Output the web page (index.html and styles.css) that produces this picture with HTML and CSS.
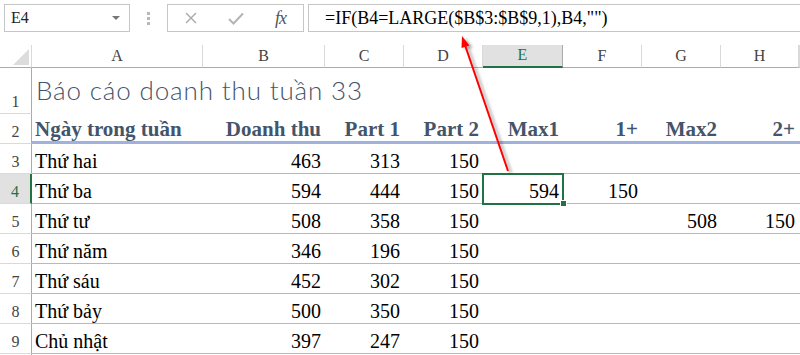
FILE: index.html
```html
<!DOCTYPE html>
<html lang="vi">
<head>
    <meta charset="UTF-8">
    <title>Báo cáo doanh thu tuần 33</title>
    <link rel="stylesheet" href="styles.css">
</head>
<body>
    <div class="formula-bar">
        <div class="name-box">
            <span>E4</span>
            <span class="caret"></span>
        </div>
        <div class="grip"><span></span><span></span><span></span></div>
        <div class="fx-box">
            <span class="fx-btn">
                <svg width="12" height="12" viewBox="0 0 12 12"><path d="M1 1 L11 11 M11 1 L1 11" stroke="#a8a8a8" stroke-width="1.4" fill="none"/></svg>
            </span>
            <span class="fx-btn">
                <svg width="16" height="13" viewBox="0 0 16 13"><path d="M1 7 L5.5 11.5 L15 1.5" stroke="#b4b4b4" stroke-width="2" fill="none"/></svg>
            </span>
            <span class="fx-btn fx-label"><i>f</i><i>x</i></span>
        </div>
        <div class="formula">=IF(B4=LARGE($B$3:$B$9,1),B4,"")</div>
    </div>

    <div class="sheet">
        <div class="row cols">
            <div class="corner"><span class="tri"></span></div>
            <div>A</div><div>B</div><div>C</div><div>D</div>
            <div class="active">E</div>
            <div>F</div><div>G</div><div>H</div><div></div>
        </div>
        <div class="row r1">
            <div class="rh">1</div>
            <div class="c title">Báo cáo doanh thu tuần 33</div>
            <div class="c"></div><div class="c"></div><div class="c"></div><div class="c"></div>
            <div class="c"></div><div class="c"></div><div class="c"></div><div class="c"></div>
        </div>
        <div class="row r2">
            <div class="rh">2</div>
            <div class="c">Ngày trong tuần</div>
            <div class="c num">Doanh thu</div>
            <div class="c num">Part 1</div>
            <div class="c num">Part 2</div>
            <div class="c num">Max1</div>
            <div class="c num">1+</div>
            <div class="c num">Max2</div>
            <div class="c num">2+</div>
            <div class="c"></div>
        </div>
        <div class="row">
            <div class="rh">3</div>
            <div class="c">Thứ hai</div>
            <div class="c num">463</div><div class="c num">313</div><div class="c num">150</div>
            <div class="c"></div><div class="c"></div><div class="c"></div><div class="c"></div><div class="c"></div>
        </div>
        <div class="row">
            <div class="rh current">4</div>
            <div class="c">Thứ ba</div>
            <div class="c num">594</div><div class="c num">444</div><div class="c num">150</div>
            <div class="c num sel">594</div>
            <div class="c num">150</div>
            <div class="c"></div><div class="c"></div><div class="c"></div>
        </div>
        <div class="row">
            <div class="rh">5</div>
            <div class="c">Thứ tư</div>
            <div class="c num">508</div><div class="c num">358</div><div class="c num">150</div>
            <div class="c"></div><div class="c"></div>
            <div class="c num">508</div>
            <div class="c num">150</div>
            <div class="c"></div>
        </div>
        <div class="row">
            <div class="rh">6</div>
            <div class="c">Thứ năm</div>
            <div class="c num">346</div><div class="c num">196</div><div class="c num">150</div>
            <div class="c"></div><div class="c"></div><div class="c"></div><div class="c"></div><div class="c"></div>
        </div>
        <div class="row">
            <div class="rh">7</div>
            <div class="c">Thứ sáu</div>
            <div class="c num">452</div><div class="c num">302</div><div class="c num">150</div>
            <div class="c"></div><div class="c"></div><div class="c"></div><div class="c"></div><div class="c"></div>
        </div>
        <div class="row">
            <div class="rh">8</div>
            <div class="c">Thứ bảy</div>
            <div class="c num">500</div><div class="c num">350</div><div class="c num">150</div>
            <div class="c"></div><div class="c"></div><div class="c"></div><div class="c"></div><div class="c"></div>
        </div>
        <div class="row">
            <div class="rh">9</div>
            <div class="c">Chủ nhật</div>
            <div class="c num">397</div><div class="c num">247</div><div class="c num">150</div>
            <div class="c"></div><div class="c"></div><div class="c"></div><div class="c"></div><div class="c"></div>
        </div>
        <div class="row tail">
            <div class="rh"></div>
            <div class="c"></div>
        </div>
    </div>

    <!-- callout arrow from E4 to the formula -->
    <svg class="arrow" width="800" height="355" viewBox="0 0 800 355">
        <defs>
            <filter id="shadow" x="-50%" y="-50%" width="200%" height="200%">
                <feDropShadow dx="3" dy="2" stdDeviation="1.5" flood-color="#000" flood-opacity="0.35"/>
            </filter>
        </defs>
        <g filter="url(#shadow)">
            <line x1="508" y1="171" x2="465" y2="45" stroke="#ff0000" stroke-width="2"/>
            <polygon points="462,36 469.5,45.5 461.5,48" fill="#ff0000"/>
        </g>
    </svg>
</body>
</html>
```

FILE: styles.css
```css
body {
    margin: 0;
    width: 800px;
    height: 355px;
    overflow: hidden;
    position: relative;
    background-color: #fff;
    font-family: "Liberation Serif", "Times New Roman", serif;
    color: #000;
}

/* formula bar */

.formula-bar {
    display: flex;
    align-items: flex-start;
    height: 45px;
    padding: 4px 0 0 4px;
    box-sizing: border-box;
}

.name-box {
    display: flex;
    align-items: center;
    justify-content: space-between;
    width: 126px;
    height: 28px;
    box-sizing: border-box;
    padding: 0 9px 0 6px;
    border: 1px solid #c6c6c6;
    font-size: 16px;
    color: #222;
}

.caret {
    border-left: 4px solid transparent;
    border-right: 4px solid transparent;
    border-top: 4px solid #777;
}

.grip {
    display: flex;
    flex-direction: column;
    align-items: center;
    gap: 2px;
    width: 37px;
    padding-top: 8px;
}

.grip span {
    width: 3px;
    height: 3px;
    background-color: #b8b8b8;
}

.fx-box {
    display: flex;
    align-items: center;
    width: 137px;
    height: 28px;
    box-sizing: border-box;
    border: 1px solid #c6c6c6;
}

.fx-btn {
    display: flex;
    align-items: center;
    justify-content: center;
    width: 45px;
}

.fx-label {
    font-size: 18px;
    color: #555;
    letter-spacing: -1px;
}

.formula {
    flex: 1;
    display: flex;
    align-items: center;
    height: 28px;
    box-sizing: border-box;
    margin-left: 4px;
    padding-left: 16px;
    border: 1px solid #c6c6c6;
    border-right: none;
    font-size: 18px;
}

/* sheet grid */

.row {
    display: grid;
    grid-template-columns: 32px 171px 122px 79px 79px 80px 79px 79px 78px 1fr;
    height: 30px;
}

.row > div {
    display: flex;
    align-items: flex-end;
    box-sizing: border-box;
    white-space: nowrap;
}

.cols {
    height: 23px;
}

.cols > div {
    justify-content: center;
    padding-bottom: 2px;
    border-bottom: 1px solid #ababab;
    border-right: 1px solid #d9d9d9;
    font-size: 16px;
    color: #444;
}

.cols .corner {
    justify-content: flex-end;
    padding: 0 2px 2px 0;
}

.tri {
    width: 16px;
    height: 16px;
    background-color: #dcdcdc;
    clip-path: polygon(100% 0, 100% 100%, 0 100%);
}

.cols .active {
    background-color: #e1e1e1;
    color: #217346;
    border-bottom: 2px solid #217346;
    border-right-color: #ababab;
}

.rh {
    justify-content: center;
    padding-bottom: 2px;
    border-right: 1px solid #ababab;
    border-bottom: 1px solid #d9d9d9;
    font-size: 16px;
    color: #444;
}

.rh.current {
    background-color: #e1e1e1;
    color: #217346;
    border-right: 2px solid #217346;
}

.c {
    padding: 0 4px 1px 3px;
    border-bottom: 1px solid #a8b8de;
    font-size: 20px;
    line-height: 22px;
}

.num {
    justify-content: flex-end;
}

.tail {
    height: 2px;
}

.tail > div {
    border-bottom: none;
}

.r1 {
    height: 46px;
}

.r1 .c {
    border-bottom: none;
}

.title {
    padding-left: 4px;
    padding-bottom: 8px;
    font-family: Lato, "Open Sans", sans-serif;
    font-weight: 300;
    font-size: 26px;
    line-height: 31px;
    letter-spacing: 0.85px;
    color: #44546a;
}

.r2 .c {
    padding-bottom: 0;
    border-bottom: 3px solid #9fb1dc;
    font-weight: bold;
    font-size: 21px;
    line-height: 23px;
    color: #44546a;
}

.sel {
    position: relative;
    outline: 2px solid #217346;
    outline-offset: -1px;
}

.sel::after {
    content: "";
    position: absolute;
    right: -4px;
    bottom: -4px;
    width: 5px;
    height: 5px;
    background-color: #217346;
    border: 1px solid #fff;
}

.arrow {
    position: absolute;
    top: 0;
    left: 0;
    pointer-events: none;
}
```
